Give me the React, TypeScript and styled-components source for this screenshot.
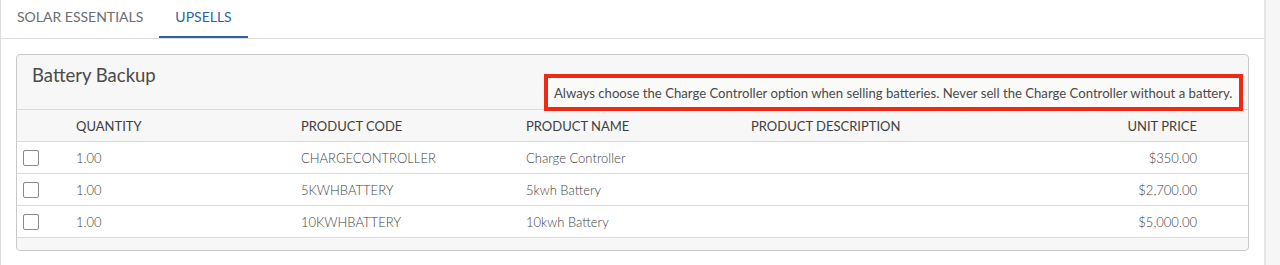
import styled, { createGlobalStyle } from 'styled-components';

const GlobalStyle = createGlobalStyle`
	html, body {
		margin: 0;
		padding: 0;
		background: #ffffff;
	}
	body {
		font-family: Lato, 'Open Sans', 'Liberation Sans', sans-serif;
		color: #3e3e3c;
	}
`;

interface IUpsellRow {
	quantity: string;
	code: string;
	name: string;
	description: string;
	price: string;
}

const rows: IUpsellRow[] = [
	{ quantity: '1.00', code: 'CHARGECONTROLLER', name: 'Charge Controller', description: '', price: '$350.00' },
	{ quantity: '1.00', code: '5KWHBATTERY', name: '5kwh Battery', description: '', price: '$2,700.00' },
	{ quantity: '1.00', code: '10KWHBATTERY', name: '10kwh Battery', description: '', price: '$5,000.00' },
];

export default function App() {
	return (
		<>
			<GlobalStyle />
			<Page>
				<Main>
					<TabBar>
						<Tab>SOLAR ESSENTIALS</Tab>
						<Tab $active>UPSELLS</Tab>
					</TabBar>
					<Card>
						<CardHeader>
							<CardTitle>Battery Backup</CardTitle>
							<Callout>
								Always choose the Charge Controller option when selling batteries. Never sell the Charge Controller
								without a battery.
							</Callout>
						</CardHeader>
						<Table>
							<HeadRow>
								<Cell />
								<HeadCell>QUANTITY</HeadCell>
								<HeadCell>PRODUCT CODE</HeadCell>
								<HeadCell>PRODUCT NAME</HeadCell>
								<HeadCell>PRODUCT DESCRIPTION</HeadCell>
								<HeadCell $right>UNIT PRICE</HeadCell>
							</HeadRow>
							{rows.map((row) => (
								<BodyRow key={row.code}>
									<Cell>
										<Checkbox type='checkbox' aria-label={`Select ${row.name}`} />
									</Cell>
									<Cell>{row.quantity}</Cell>
									<Cell>{row.code}</Cell>
									<Cell>{row.name}</Cell>
									<Cell>{row.description}</Cell>
									<Cell $right>{row.price}</Cell>
								</BodyRow>
							))}
							<TableFooter />
						</Table>
					</Card>
				</Main>
				<SideStrip />
			</Page>
		</>
	);
}

const Page = styled.div`
	display: flex;
	flex-direction: row;
	width: 1280px;
	height: 265px;
	overflow: hidden;
`;

const Main = styled.div`
	flex: 1;
	display: flex;
	flex-direction: column;
	border-left: 1px solid #dddbda;
`;

const SideStrip = styled.div`
	width: 14px;
	background: #f6f6f6;
	border-left: 2px solid #e4e4e4;
`;

const TabBar = styled.div`
	display: flex;
	flex-direction: row;
	height: 38px;
	border-bottom: 1px solid #dddbda;
`;

const Tab = styled.div<{ $active?: boolean }>`
	display: flex;
	align-items: center;
	padding: 0 16px 4px 16px;
	height: 38px;
	box-sizing: border-box;
	font-size: 14px;
	letter-spacing: 0;
	color: ${(props) => (props.$active ? '#2b62a8' : '#6b6d70')};
	border-bottom: 2px solid ${(props) => (props.$active ? '#2b62a8' : 'transparent')};
	margin-bottom: -1px;
`;

const Card = styled.div`
	margin: 15px 15px 0 15px;
	border: 1px solid #c9c9c9;
	border-radius: 4px;
	background: #f7f7f7;
`;

const CardHeader = styled.div`
	position: relative;
	height: 55px;
	box-sizing: border-box;
	padding: 8px 16px 0 15px;
	border-bottom: 1px solid #dddbda;
	border-radius: 4px 4px 0 0;
`;

const CardTitle = styled.div`
	font-size: 18.5px;
	line-height: 24px;
	color: #4a4a48;
`;

const Callout = styled.div`
	position: absolute;
	right: 5px;
	bottom: -2px;
	width: 699px;
	height: 37px;
	box-sizing: border-box;
	border: 4px solid #ee2a14;
	display: flex;
	align-items: center;
	padding: 1px 0 0 6px;
	font-size: 13.15px;
	color: #4a4a4a;
	white-space: nowrap;
	background: #fafaf9;
`;

const Table = styled.div`
	display: flex;
	flex-direction: column;
`;

const RowBase = styled.div`
	display: grid;
	grid-template-columns: 51px 225px 225px 225px 1fr 225px;
	height: 32px;
	box-sizing: border-box;
	border-bottom: 1px solid #dddbda;
	align-items: center;
`;

const HeadRow = styled(RowBase)`
	background: #f7f7f7;
	font-size: 13px;
	color: #3e3e3c;
`;

const BodyRow = styled(RowBase)`
	background: #ffffff;
	font-size: 13px;
	font-weight: 300;
	color: #3f3f3f;
`;

const Cell = styled.div<{ $right?: boolean }>`
	padding: 0 ${(props) => (props.$right ? '51px' : '8px')} 0 8px;
	white-space: nowrap;
	display: flex;
	align-items: center;
	justify-content: ${(props) => (props.$right ? 'flex-end' : 'flex-start')};
`;

const HeadCell = styled(Cell)`
	font-weight: 400;
`;

const Checkbox = styled.input`
	appearance: none;
	-webkit-appearance: none;
	width: 16px;
	height: 16px;
	margin: 0 0 0 -2px;
	border: 1px solid #8a8a8a;
	border-radius: 2px;
	background: #ffffff;
`;

const TableFooter = styled.div`
	height: 12px;
	background: #f7f7f7;
	border-radius: 0 0 4px 4px;
`;
